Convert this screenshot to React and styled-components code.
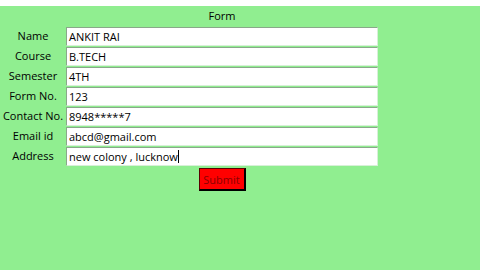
import React from 'react';
import styled, { createGlobalStyle } from 'styled-components';

const GlobalStyle = createGlobalStyle`
  html, body {
    margin: 0;
    padding: 0;
    background: #ffffff;
  }
  body {
    font-family: "Open Sans", "Noto Sans", sans-serif;
  }
`;

const fields = [
  { label: 'Name', value: 'ANKIT RAI' },
  { label: 'Course', value: 'B.TECH' },
  { label: 'Semester', value: '4TH' },
  { label: 'Form No.', value: '123' },
  { label: 'Contact No.', value: '8948*****7' },
  { label: 'Email id', value: 'abcd@gmail.com' },
  { label: 'Address', value: 'new colony , lucknow', caret: true },
];

const Page = styled.div`
  margin-top: 6px;
  height: 264px;
  background: #90ee90;
  color: #000;
`;

const FormBox = styled.div`
  width: 444px;
  display: flex;
  flex-direction: column;
`;

const Title = styled.div`
  height: 20px;
  line-height: 20px;
  text-align: center;
  font-size: 11px;
`;

const Grid = styled.div`
  display: grid;
  grid-template-columns: 66px 312px;
  grid-auto-rows: 20px;
`;

const Label = styled.div`
  font-size: 11px;
  line-height: 20px;
  text-align: center;
  white-space: nowrap;
`;

const Field = styled.div`
  box-sizing: border-box;
  height: 19px;
  margin-top: 1px;
  background: #fff;
  border-top: 1px solid #8aa88a;
  border-left: 1px solid #8aa88a;
  border-right: 1px solid #d8f0d8;
  border-bottom: 1px solid #d8f0d8;
  font-size: 11px;
  line-height: 17px;
  padding-left: 2px;
  white-space: nowrap;
`;

const Caret = styled.span`
  display: inline-block;
  width: 1px;
  height: 13px;
  background: #000;
  vertical-align: -2px;
`;

const ButtonRow = styled.div`
  display: flex;
  justify-content: center;
  padding-top: 2px;
`;

const SubmitButton = styled.button`
  box-sizing: border-box;
  width: 47px;
  height: 23px;
  background: #ff0000;
  color: #8b0000;
  font-family: "Open Sans", "Noto Sans", sans-serif;
  font-size: 11px;
  padding: 0;
  border-top: 1px solid #5a0000;
  border-left: 1px solid #5a0000;
  border-right: 2px solid #000;
  border-bottom: 2px solid #000;
`;

export default function App() {
  return (
    <>
      <GlobalStyle />
      <Page>
        <FormBox>
          <Title>Form</Title>
          <Grid>
            {fields.map((f) => (
              <React.Fragment key={f.label}>
                <Label>{f.label}</Label>
                <Field>
                  {f.value}
                  {f.caret && <Caret />}
                </Field>
              </React.Fragment>
            ))}
          </Grid>
          <ButtonRow>
            <SubmitButton>Submit</SubmitButton>
          </ButtonRow>
        </FormBox>
      </Page>
    </>
  );
}
